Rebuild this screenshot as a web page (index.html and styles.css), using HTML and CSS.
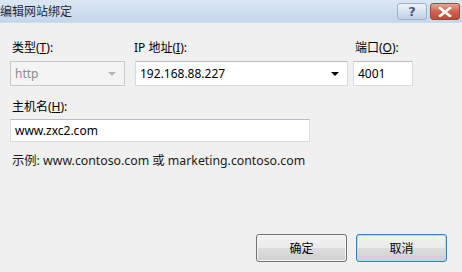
FILE: index.html
```html
<!DOCTYPE html>
<html lang="zh-CN">
<head>
    <meta charset="UTF-8">
    <title>编辑网站绑定</title>
    <link rel="stylesheet" href="styles.css">
</head>
<body>
<div class="dialog">
    <div class="titlebar">
        <div class="title">编辑网站绑定</div>
        <div class="caption-btns">
            <span class="cap-btn help">?</span>
            <span class="cap-btn close">
                <svg width="14" height="10" viewBox="0 0 14 10">
                    <path d="M2 1 L12 9 M12 1 L2 9" stroke="#fff" stroke-width="2.6" stroke-linecap="square"/>
                </svg>
            </span>
        </div>
    </div>

    <div class="content">
        <div class="row-fields">
            <div class="field f-type">
                <label>类型(<u>T</u>):</label>
                <div class="combo disabled">
                    <span>http</span>
                    <span class="arrow"></span>
                </div>
            </div>
            <div class="field f-ip">
                <label>IP 地址(<u>I</u>):</label>
                <div class="combo">
                    <span>192.168.88.227</span>
                    <span class="arrow"></span>
                </div>
            </div>
            <div class="field f-port">
                <label>端口(<u>O</u>):</label>
                <div class="textbox">4001</div>
            </div>
        </div>

        <div class="field f-host">
            <label>主机名(<u>H</u>):</label>
            <div class="textbox">www.zxc2.com</div>
        </div>

        <p class="example">示例: www.contoso.com 或 marketing.contoso.com</p>

        <div class="buttons">
            <button class="btn">确定</button>
            <button class="btn focused">取消</button>
        </div>
    </div>
</div>
</body>
</html>
```

FILE: styles.css
```css
* {
    margin: 0;
    padding: 0;
    box-sizing: border-box;
}

body {
    font-family: "Noto Sans", "Noto Sans CJK SC", sans-serif;
    font-size: 12px;
    color: #000;
    background-color: #f0f0f0;
}

.dialog {
    width: 462px;
    height: 272px;
    display: flex;
    flex-direction: column;
}

/* Title bar */
.titlebar {
    height: 23px;
    display: flex;
    align-items: center;
    justify-content: space-between;
    background: linear-gradient(to bottom, #dbe7f3, #c3d6eb);
    border-bottom: 1px solid #d0dcea;
}

.title {
    font-size: 12px;
    color: #1e2a3a;
}

.caption-btns {
    display: flex;
    gap: 3px;
    padding-right: 2px;
    align-self: flex-start;
    padding-top: 3px;
}

.cap-btn {
    width: 30px;
    height: 17px;
    border-radius: 3px;
    display: flex;
    align-items: center;
    justify-content: center;
}

.cap-btn.help {
    border: 1px solid #9db1cb;
    background: linear-gradient(to bottom, #eef3f9, #bfd0e5);
    color: #4a5c78;
    font-size: 13px;
    font-weight: bold;
    font-family: "DejaVu Sans", sans-serif;
}

.cap-btn.close {
    border: 1px solid #9b4a3c;
    background: linear-gradient(to bottom, #e8a597, #cf6350 50%, #c04a34);
}

/* Content */
.content {
    flex: 1;
    padding: 17px 10px 10px 10px;
    display: flex;
    flex-direction: column;
}

.row-fields {
    display: flex;
    gap: 10px;
}

.field label {
    display: block;
    padding-left: 2px;
    height: 21px;
    line-height: 16px;
}

.f-type {
    width: 115px;
}

.f-ip {
    width: 213px;
}

.f-ip label {
    padding-left: 0;
    margin-left: -1px;
}

.f-port {
    width: 60px;
    margin-left: -5px;
}

.combo,
.textbox {
    height: 25px;
    display: flex;
    align-items: center;
    justify-content: space-between;
    background-color: #fff;
    border: 1px solid #d8dce2;
    border-top-color: #b8bcc4;
    padding: 0 5px 0 4px;
    font-size: 12px;
}

.combo.disabled {
    background-color: #f4f4f4;
    color: #8c8c8c;
    border-color: #c9c9c9;
}

.arrow {
    width: 0;
    height: 0;
    border-left: 4px solid transparent;
    border-right: 4px solid transparent;
    border-top: 4px solid #000;
    margin-right: 3px;
}

.combo.disabled .arrow {
    border-top-color: #b4b4b4;
}

.f-host {
    margin-top: 13px;
    width: 300px;
}

.f-host label {
    height: 20px;
}

.f-host .textbox {
    height: 23px;
}

.example {
    margin-top: 9px;
    padding-left: 2px;
    color: #1a1a1a;
    font-size: 12.3px;
}

.buttons {
    margin-top: auto;
    display: flex;
    justify-content: flex-end;
    gap: 9px;
    padding-right: 5px;
}

.btn {
    width: 91px;
    height: 28px;
    font-family: inherit;
    font-size: 12px;
    border: 1px solid #707070;
    border-radius: 3px;
    background: linear-gradient(to bottom, #f2f2f2 0%, #ebebeb 50%, #dddddd 51%, #cfcfcf 100%);
    box-shadow: inset 0 0 0 1px #f8f8f8;
}

.btn.focused {
    border-color: #3c7fb1;
    box-shadow: inset 0 0 0 1px #a6e1f7;
}
```
